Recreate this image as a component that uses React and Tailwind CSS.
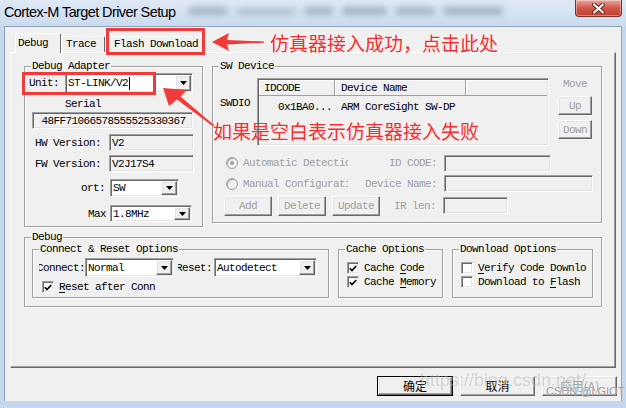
const MONO = "font-['Liberation_Mono','DejaVu_Sans_Mono',monospace] text-[11px] leading-[12px] tracking-[-0.6px]";
const SUNKEN = "border border-t-[#a0a0a0] border-l-[#a0a0a0] border-b-white border-r-white shadow-[inset_1px_1px_0_#696969,inset_-1px_-1px_0_#e3e3e3]";
const RAISED = "border border-t-white border-l-white border-b-[#696969] border-r-[#696969] shadow-[inset_-1px_-1px_0_#a0a0a0,inset_1px_1px_0_#e3e3e3] bg-[#f0f0f0]";
const CJK = "font-['Noto_Sans_CJK_SC',sans-serif]";

function Tri() {
  return (
    <svg width="7" height="4" viewBox="0 0 7 4">
      <polygon points="0,0 7,0 3.5,4" fill="black" />
    </svg>
  );
}

function Combo({ value, className = "", caret }) {
  return (
    <div className={`flex items-stretch bg-white ${SUNKEN} ${className}`}>
      <div className="flex flex-1 items-center overflow-hidden whitespace-nowrap pl-[2px] text-black">
        {value}
        {caret && <span className="ml-[1px] inline-block h-[13px] w-px bg-black" />}
      </div>
      <div className={`m-px flex w-[16px] items-center justify-center ${RAISED}`}>
        <Tri />
      </div>
    </div>
  );
}

function Field({ value, className = "", center }) {
  return (
    <div className={`flex items-center overflow-hidden whitespace-nowrap bg-[#f0f0f0] pl-[2px] ${center ? "justify-center pl-0" : ""} ${SUNKEN} ${className}`}>
      {value}
    </div>
  );
}

function Btn({ children, className = "", disabled }) {
  return (
    <div className={`flex items-center justify-center ${RAISED} ${disabled ? "text-[#a0a0a0]" : "text-black"} ${className}`}>
      {children}
    </div>
  );
}

function Group({ label, className = "", children }) {
  return (
    <fieldset className={`min-w-0 border border-[#a0a0a0] shadow-[1px_1px_0_#fff,inset_1px_1px_0_#fff] ${className}`}>
      <legend className="ml-[6px] bg-[#f0f0f0] px-[1px]">{label}</legend>
      {children}
    </fieldset>
  );
}

function Check({ checked }) {
  return (
    <span className={`flex h-[12px] w-[12px] shrink-0 items-center justify-center bg-white ${SUNKEN}`}>
      {checked && (
        <svg width="8" height="7" viewBox="0 0 8 7">
          <path d="M0.8 3.2 L3 5.6 L7.2 1" fill="none" stroke="black" strokeWidth="1.7" />
        </svg>
      )}
    </span>
  );
}

function Radio({ checked }) {
  return (
    <span className="flex h-[12px] w-[12px] shrink-0 items-center justify-center rounded-full border border-[#a0a0a0] bg-[#f0f0f0] shadow-[inset_1px_1px_0_#b0b0b0]">
      {checked && <span className="h-[4px] w-[4px] rounded-full bg-[#a0a0a0]" />}
    </span>
  );
}

function Clip({ text, className = "" }) {
  return (
    <div className={`flex justify-end overflow-hidden whitespace-nowrap ${className}`}>
      <span className="shrink-0">{text}</span>
    </div>
  );
}

function CheckRow({ checked, pre, u, post, className = "" }) {
  return (
    <div className={`flex h-[14px] items-center ${className}`}>
      <Check checked={checked} />
      <span className="ml-[5px] whitespace-nowrap">
        {pre}
        <span className="underline underline-offset-2">{u}</span>
        {post}
      </span>
    </div>
  );
}

function DebugAdapter() {
  return (
    <Group label="Debug Adapter" className="h-[167px] w-[179px]">
      <div className="mt-[1px] flex h-[20px] items-center pl-[4px]">
        <span className="w-[36px]">Unit:</span>
        <Combo value="ST-LINK/V2" caret className="h-[20px] w-[128px]" />
      </div>
      <div className="mt-[5px] h-[12px] pl-[40px]">Serial</div>
      <Field value="48FF71066578555525330367" center className="ml-[7px] mt-[2px] h-[17px] w-[161px]" />
      <div className="mt-[5px] flex h-[17px] items-center pl-[10px]">
        <span className="w-[74px]">HW Version:</span>
        <Field value="V2" className="h-[17px] w-[85px]" />
      </div>
      <div className="mt-[4px] flex h-[17px] items-center pl-[10px]">
        <span className="w-[74px]">FW Version:</span>
        <Field value="V2J17S4" className="h-[17px] w-[85px]" />
      </div>
      <div className="mt-[7px] flex h-[18px] items-center">
        <Clip text="Port:" className="ml-[56px] w-[24px]" />
        <Combo value="SW" className="ml-[5px] h-[18px] w-[69px]" />
      </div>
      <div className="mt-[8px] flex h-[17px] items-center">
        <Clip text="Max" className="ml-[63px] w-[18px]" />
        <Combo value="1.8MHz" className="ml-[4px] h-[17px] w-[82px]" />
      </div>
    </Group>
  );
}

function SwDevice() {
  return (
    <Group label="SW Device" className="h-[163px] w-[390px]">
      <div className="mt-[6px] flex items-start pl-[7px]">
        <span className="mt-[19px] w-[37px]">SWDIO</span>
        <div className={`h-[68px] w-[292px] bg-[#f0f0f0] p-px ${SUNKEN}`}>
          <div className="flex h-[16px] items-stretch border-b border-[#a0a0a0] bg-[#f0f0f0]">
            <div className="flex w-[76px] items-center border-r border-[#a0a0a0] pl-[5px] shadow-[inset_1px_1px_0_#fff]">IDCODE</div>
            <div className="flex w-[131px] items-center border-r border-[#a0a0a0] pl-[6px] shadow-[inset_1px_1px_0_#fff]">Device Name</div>
            <div className="flex-1 shadow-[inset_1px_1px_0_#fff]" />
          </div>
          <div className="mt-[5px] flex h-[12px] items-center">
            <span className="w-[76px] pr-[3px] text-right">0x1BA0...</span>
            <span className="pl-[6px]">ARM CoreSight SW-DP</span>
          </div>
        </div>
        <div className="ml-[9px] flex w-[34px] flex-col items-center">
          <span className="h-[12px] text-[#a0a0a0]">Move</span>
          <Btn disabled className="mt-[6px] h-[19px] w-[34px]">Up</Btn>
          <Btn disabled className="mt-[5px] h-[19px] w-[34px]">Down</Btn>
        </div>
      </div>
      <div className="mt-[8px] flex h-[18px] items-center pl-[13px] text-[#a0a0a0]">
        <Radio checked />
        <span className="ml-[5px] w-[105px] overflow-hidden whitespace-nowrap">Automatic Detection</span>
        <span className="ml-[17px] w-[72px] text-right">ID CODE:</span>
        <Field value="" className="ml-[7px] h-[17px] w-[107px]" />
      </div>
      <div className="mt-[3px] flex h-[17px] items-center pl-[13px] text-[#a0a0a0]">
        <Radio />
        <span className="ml-[5px] w-[105px] overflow-hidden whitespace-nowrap">Manual Configuration</span>
        <span className="ml-[17px] w-[72px] text-right">Device Name:</span>
        <Field value="" className="ml-[7px] h-[17px] w-[149px]" />
      </div>
      <div className="mt-[4px] flex h-[20px] items-start pl-[11px]">
        <div className="flex gap-[6px]">
          <Btn disabled className="h-[20px] w-[48px]">Add</Btn>
          <Btn disabled className="h-[20px] w-[48px]">Delete</Btn>
          <Btn disabled className="h-[20px] w-[48px]">Update</Btn>
        </div>
        <span className="ml-[8px] mt-[4px] w-[48px] text-right text-[#a0a0a0]">IR len:</span>
        <Field value="" className="ml-[7px] mt-[1px] h-[17px] w-[65px]" />
      </div>
    </Group>
  );
}

function DebugGroup() {
  return (
    <Group label="Debug" className="mt-[4px] h-[76px] w-[578px]">
      <div className="flex items-start gap-[9px] pl-[7px]">
        <Group label="Connect & Reset Options" className="h-[55px] w-[297px]">
          <div className="mt-[3px] flex h-[19px] items-center">
            <Clip text="Connect:" className="ml-[6px] w-[46px]" />
            <Combo value="Normal" className="h-[19px] w-[89px]" />
            <Clip text="Reset:" className="ml-[4px] w-[36px] pr-[2px]" />
            <Combo value="Autodetect" className="h-[19px] w-[103px]" />
          </div>
          <CheckRow checked pre="" u="R" post="eset after Conn" className="ml-[9px] mt-[3px]" />
        </Group>
        <Group label="Cache Options" className="h-[55px] w-[105px]">
          <CheckRow checked pre="Cache " u="C" post="ode" className="ml-[8px] mt-[6px]" />
          <CheckRow checked pre="Cache " u="M" post="emory" className="ml-[8px]" />
        </Group>
        <Group label="Download Options" className="h-[55px] w-[141px]">
          <CheckRow pre="" u="V" post="erify Code Downlo" className="ml-[8px] mt-[6px]" />
          <CheckRow pre="Download to " u="F" post="lash" className="ml-[8px]" />
        </Group>
      </div>
    </Group>
  );
}

function TitleBar() {
  return (
    <div className="flex h-[26px] items-start bg-gradient-to-b from-[#dfe9f5] to-[#cadbee]">
      <span className="ml-[4px] mt-[3px] font-['Liberation_Sans',sans-serif] text-[14.5px] leading-[18px] text-black">
        Cortex-M Target Driver Setup
      </span>
      <div className="ml-[12px] mt-[7px] flex items-center gap-[8px] opacity-60 blur-[3px]">
        <span className="h-[8px] w-[40px] rounded-full bg-[#8797ab]" />
        <span className="h-[7px] w-[60px] rounded-full bg-[#9aa9bb]" />
        <span className="h-[8px] w-[30px] rounded-full bg-[#8797ab]" />
        <span className="h-[8px] w-[45px] rounded-full bg-[#7f90a6]" />
        <span className="h-[8px] w-[40px] rounded-full bg-[#8797ab]" />
        <span className="h-[8px] w-[60px] rounded-full bg-[#7f90a6]" />
      </div>
      <div className="ml-auto mr-[4px] flex h-[17px] w-[47px] items-center justify-center rounded-b-[4px] border border-t-0 border-[#7a2e28] bg-gradient-to-b from-[#e8a79d] via-[#d0574a] to-[#c2402f] shadow-[inset_0_0_0_1px_rgba(255,255,255,0.35)]">
        <svg width="13" height="11" viewBox="0 0 13 11">
          <path d="M2 1.5 L11 9.5 M11 1.5 L2 9.5" stroke="#5a1f1a" strokeWidth="4" strokeLinecap="round" />
          <path d="M2 1.5 L11 9.5 M11 1.5 L2 9.5" stroke="#fff" strokeWidth="2.2" strokeLinecap="round" />
        </svg>
      </div>
    </div>
  );
}

export default function App() {
  return (
    <div className={`relative h-[408px] w-[626px] overflow-hidden bg-[#c4d7ec] ${MONO} text-black`}>
      <TitleBar />
      <div className="ml-[4px] flex h-[375px] w-[618px] flex-col border-x border-t border-[#8fa4bd] bg-[#f0f0f0]">
        <div className="flex h-[25px] items-end pl-[10px]">
          <div className="relative z-10 -mb-px h-[20px] w-[46px] rounded-t-[2px] border-l border-t border-r border-l-white border-t-white border-r-[#696969] bg-[#f0f0f0] pl-[2px] pt-[3px]">
            Debug
          </div>
          <div className="h-[16px] w-[44px] rounded-t-[2px] border-l border-t border-r border-l-white border-t-white border-r-[#696969] pl-[4px] pt-[1px]">
            Trace
          </div>
          <div className="ml-px h-[16px] w-[98px] rounded-t-[2px] border-l border-t border-r border-l-white border-t-white border-r-[#696969] pl-[7px] pt-[1px]">
            Flash Download
          </div>
        </div>
        <div className="ml-[5px] h-[316px] w-[606px] border border-l-white border-t-white border-b-[#696969] border-r-[#696969] pl-[13px] pt-[7px] shadow-[inset_-1px_-1px_0_#a0a0a0]">
          <div className="flex items-start gap-[9px]">
            <DebugAdapter />
            <SwDevice />
          </div>
          <DebugGroup />
        </div>
        <div className={`mt-[8px] flex justify-end gap-[7px] pr-[4px] ${CJK} text-[12px] tracking-normal`}>
          <div className="border border-black">
            <Btn className="h-[18px] w-[74px]">确定</Btn>
          </div>
          <Btn className="h-[20px] w-[75px]">取消</Btn>
          <Btn disabled className="h-[20px] w-[75px]">应用(A)</Btn>
        </div>
      </div>

      {/* annotations */}
      <div className="absolute left-[106px] top-[28px] h-[27px] w-[99px] border-[3px] border-[#f23a3a]" />
      <div className="absolute left-[22px] top-[72px] h-[23px] w-[134px] border-[3px] border-[#f23a3a]" />
      <svg className="pointer-events-none absolute left-0 top-0" width="626" height="408">
        <polygon points="212,42 229,33 227,40 264,41.5 264,42.7 227,44.5 229,51" fill="#f23a3a" />
        <polygon points="163,88 187,90 180.5,96.5 214.5,125.5 213.2,126.5 177,99.5 169,106" fill="#f23a3a" />
      </svg>
      <div className={`absolute left-[270px] top-[31px] ${CJK} text-[19px] leading-[24px] tracking-normal text-[#f52f2f]`}>
        仿真器接入成功，点击此处
      </div>
      <div className={`absolute left-[213px] top-[119px] ${CJK} text-[19px] leading-[24px] tracking-normal text-[#f52f2f]`}>
        如果是空白表示仿真器接入失败
      </div>
      <div className="pointer-events-none absolute left-[420px] top-[374px] font-['Liberation_Sans',sans-serif] text-[18px] tracking-normal text-[#b8b8b8] opacity-50">
        https://blog.csdn.net/
      </div>
      <div className="pointer-events-none absolute left-[546px] top-[385px] font-['Liberation_Sans',sans-serif] text-[11px] tracking-normal text-[#9a9a9a] [text-shadow:0_0_1px_#fff]">
        CSDN @LGIOT
      </div>
    </div>
  );
}
